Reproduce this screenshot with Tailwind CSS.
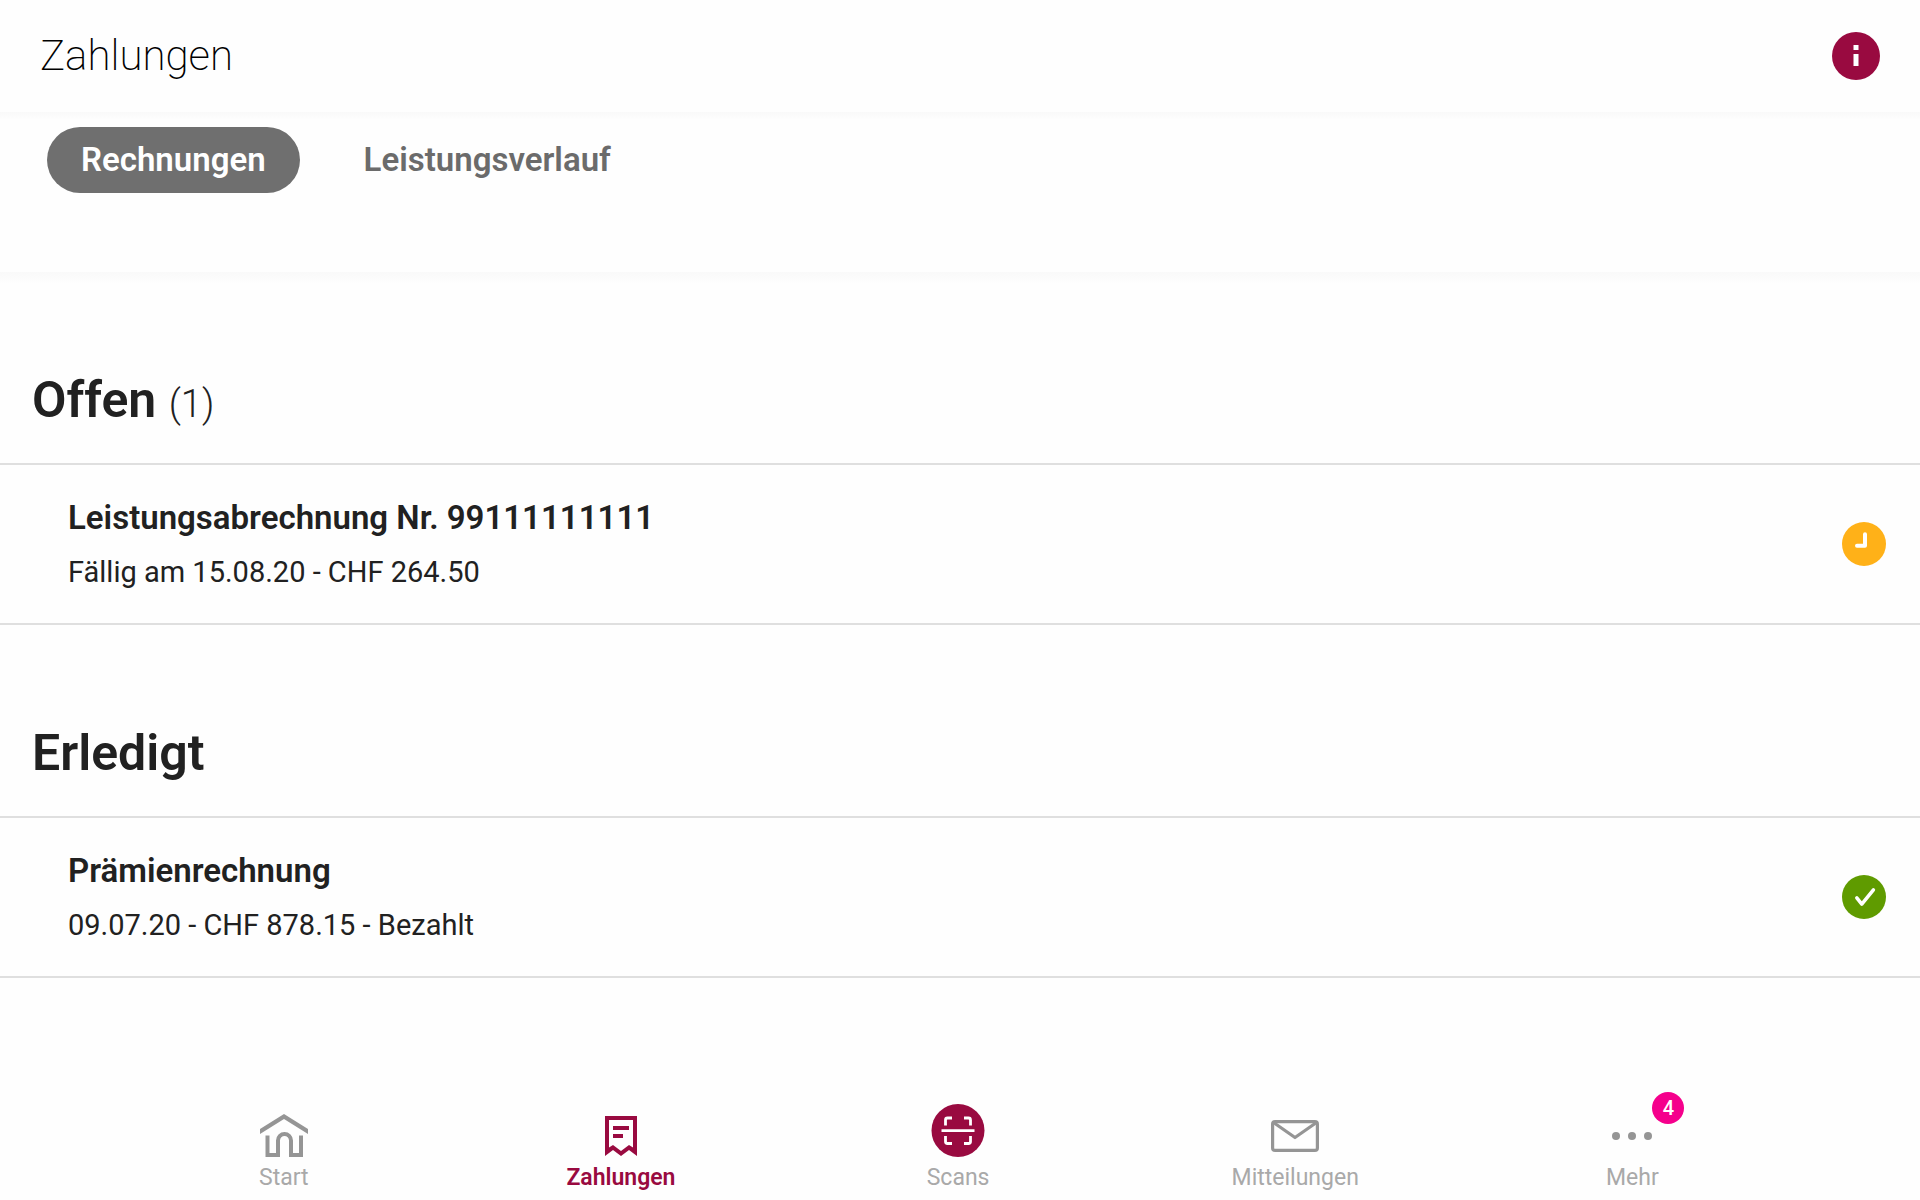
<!DOCTYPE html>
<html lang="de">
<head>
<meta charset="utf-8">
<meta name="viewport" content="width=device-width, initial-scale=1">
<title>Zahlungen</title>
<script src="https://cdn.jsdelivr.net/npm/@tailwindcss/browser@4"></script>
</head>
<body class="flex min-h-screen flex-col bg-[#fefefe] font-['Roboto',sans-serif] text-[#212121]">

<header class="flex h-28 items-center justify-between bg-[#fefefe] px-10">
  <h1 class="text-[42px] leading-12 font-extralight text-black">Zahlungen</h1>
  <button type="button" aria-label="Information" class="size-12">
    <svg viewBox="0 0 48 48" class="size-12">
      <circle cx="24" cy="24" r="24" fill="#990a40"/>
      <path d="M21.500 13h5v5h-5zM21.500 22h5v12h-5z" fill="#fff"/>
    </svg>
  </button>
</header>

<div class="h-40 bg-linear-to-b from-[#f9f9f9] to-[#fefefe] to-[8px] px-[47px] pt-[15px]">
  <div class="flex items-center gap-16" role="tablist">
    <button type="button" role="tab" aria-selected="true" class="h-[66px] rounded-full bg-[#6f6f6f] px-[34px] text-[33px] leading-11 font-semibold text-white">Rechnungen</button>
    <button type="button" role="tab" aria-selected="false" class="h-[66px] text-[33px] leading-11 font-semibold text-[#6b6b6b]">Leistungsverlauf</button>
  </div>
</div>

<main class="bg-linear-to-b from-[#f9f9f9] to-[#fefefe] to-[12px]">
  <section class="pt-24">
    <h2 class="px-8 pb-[31px] text-[50px] leading-16 font-semibold">Offen <span class="text-[38px] leading-none font-light">(1)</span></h2>
    <a href="#rechnung" class="flex items-center justify-between border-y-2 border-[#dfdfdf] py-[31px] pr-[34px] pl-[68px]">
      <div class="flex flex-col gap-3">
        <h3 class="text-[33px] leading-11 font-semibold">Leistungsabrechnung Nr. 99111111111</h3>
        <p class="text-[29px] leading-10">Fällig am 15.08.20 - CHF 264.50</p>
      </div>
      <svg viewBox="0 0 44 44" class="size-11" role="img" aria-label="Offen">
        <circle cx="22" cy="22" r="22" fill="#ffb118"/>
        <path d="M23 12.200V23.800H15" fill="none" stroke="#fff" stroke-width="4" stroke-linecap="round" stroke-linejoin="round"/>
      </svg>
    </a>
  </section>

  <section class="pt-24">
    <h2 class="px-8 pb-[31px] text-[50px] leading-16 font-semibold">Erledigt</h2>
    <a href="#praemie" class="flex items-center justify-between border-y-2 border-[#dfdfdf] py-[31px] pr-[34px] pl-[68px]">
      <div class="flex flex-col gap-3">
        <h3 class="text-[33px] leading-11 font-semibold">Prämienrechnung</h3>
        <p class="text-[29px] leading-10">09.07.20 - CHF 878.15 - Bezahlt</p>
      </div>
      <svg viewBox="0 0 44 44" class="size-11" role="img" aria-label="Bezahlt">
        <circle cx="22" cy="22" r="22" fill="#5f9b00"/>
        <path d="M14.800 22.800 19.800 29.200 31.400 14.800" fill="none" stroke="#fff" stroke-width="3.500" stroke-linecap="round" stroke-linejoin="round"/>
      </svg>
    </a>
  </section>
</main>

<nav class="mt-auto grid grid-cols-5 pr-[6.2%] pb-2 pl-[6%] text-[23px] leading-7 text-[#a9a9a9]">
  <a href="#start" class="flex flex-col items-center">
    <svg viewBox="0 0 60 60" class="size-15">
      <path d="M30 10 54 25v5L30 15 6 30v-5z" fill="#959595"/>
      <path d="M13.500 31.500V51H24V36.500a6.500 6.500 0 0 1 13 0V51H47V31.500" fill="none" stroke="#959595" stroke-width="4"/>
    </svg>
    <span>Start</span>
  </a>
  <a href="#zahlungen" aria-current="page" class="flex flex-col items-center font-semibold text-[#990a40]">
    <svg viewBox="0 0 60 60" class="size-15" fill="#990a40">
      <path fill-rule="evenodd" d="M14 12H46V52L38 46 30 52 22 46 14 52zM18 16V43.500L22 41 30 47 38 41 42 43.500V16z"/>
      <path d="M22 22h16v4H22zM22 30h10v4H22z"/>
    </svg>
    <span>Zahlungen</span>
  </a>
  <a href="#scans" class="flex flex-col items-center">
    <svg viewBox="0 0 60 60" class="size-15">
      <circle cx="30" cy="26.500" r="26.500" fill="#990a40"/>
      <path d="M17.500 21.500V16q0-2 2-2H24M36 14h4.500q2 0 2 2v5.500M42.500 32v5.500q0 2-2 2H36M24 39.500h-4.500q-2 0-2-2V32M13.500 26.700h33" fill="none" stroke="#fff" stroke-width="2.800"/>
    </svg>
    <span>Scans</span>
  </a>
  <a href="#mitteilungen" class="flex flex-col items-center">
    <svg viewBox="0 0 60 60" class="size-15" fill="none" stroke="#959595" stroke-width="3.200">
      <rect x="7.600" y="17.600" width="44.800" height="28.800" rx="2.500"/>
      <path d="M8.500 18.500 30 33.500 51.500 18.500" stroke-linejoin="round"/>
    </svg>
    <span>Mitteilungen</span>
  </a>
  <a href="#mehr" class="flex flex-col items-center">
    <div class="relative">
      <svg viewBox="0 0 60 60" class="size-15" fill="#959595">
        <circle cx="14" cy="32" r="4"/><circle cx="30" cy="32" r="4"/><circle cx="46" cy="32" r="4"/>
      </svg>
      <span class="absolute -top-3 -right-[22px] flex size-8 items-center justify-center rounded-full bg-[#f5008c] text-xl font-medium text-white">4</span>
    </div>
    <span>Mehr</span>
  </a>
</nav>

</body>
</html>
